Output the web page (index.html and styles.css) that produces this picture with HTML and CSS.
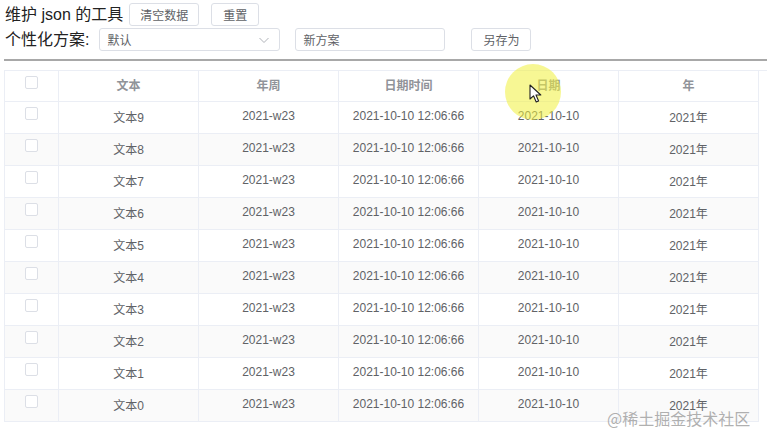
FILE: index.html
```html
<!DOCTYPE html>
<html lang="zh">
<head>
    <meta charset="UTF-8">
    <meta name="viewport" content="width=device-width, initial-scale=1.0">
    <title>维护 json 的工具</title>
    <link rel="stylesheet" href="styles.css">
</head>
<body>
    <div class="cabecera">
        <div class="fila">
            <span class="titulo">维护 json 的工具</span>
            <button class="boton ancho">清空数据</button>
            <button class="boton corto">重置</button>
        </div>
        <div class="fila">
            <span class="titulo etiqueta">个性化方案:</span>
            <div class="selector">
                <span>默认</span>
                <svg width="12" height="12" viewBox="0 0 12 12"><path d="M1.5 4 L6 8.5 L10.5 4" fill="none" stroke="#b0b3b9" stroke-width="1"/></svg>
            </div>
            <input class="entrada" value="新方案">
            <button class="boton guardar">另存为</button>
        </div>
    </div>
    <div class="linea"></div>

    <div class="tabla-caja">
        <table class="tabla">
            <colgroup>
                <col style="width:54px">
                <col style="width:140px">
                <col style="width:140px">
                <col style="width:140px">
                <col style="width:140px">
                <col style="width:140px">
            </colgroup>
            <thead>
                <tr>
                    <th><span class="casilla"></span></th>
                    <th>文本</th>
                    <th>年周</th>
                    <th>日期时间</th>
                    <th>日期</th>
                    <th>年</th>
                </tr>
            </thead>
            <tbody id="cuerpo"></tbody>
        </table>
    </div>

    <div class="cursor-luz"></div>
    <svg class="cursor" width="14" height="20" viewBox="0 0 14 20">
        <path d="M1 1 L1 15 L4.5 11.8 L7.2 18 L9.6 17 L7 11 L11.8 11 Z" fill="#fff" stroke="#222" stroke-width="1.1" stroke-linejoin="round"/>
    </svg>
    <div class="marca">@稀土掘金技术社区</div>

    <script>
        document.addEventListener('DOMContentLoaded', function() {
            const cuerpo = document.getElementById('cuerpo');
            for (let i = 9; i >= 0; i--) {
                const fila = document.createElement('tr');
                fila.innerHTML = `
                    <td><span class="casilla"></span></td>
                    <td>文本${i}</td>
                    <td>2021-w23</td>
                    <td>2021-10-10 12:06:66</td>
                    <td>2021-10-10</td>
                    <td>2021年</td>`;
                cuerpo.appendChild(fila);
            }
        });
    </script>
</body>
</html>
```

FILE: styles.css
```css
body {
    margin: 0;
    background-color: #fff;
    font-family: "Liberation Sans", "Noto Sans CJK SC", sans-serif;
    color: #222;
    position: relative;
    width: 767px;
    height: 442px;
    overflow: hidden;
}
.cabecera {
    padding: 3px 0 0 5px;
    display: flex;
    flex-direction: column;
    gap: 2px;
}
.fila {
    display: flex;
    align-items: center;
    height: 23px;
}
.titulo {
    font-size: 16px;
    line-height: 23px;
    margin-right: 6px;
}
.etiqueta {
    margin-right: 10px;
}
.boton {
    height: 23px;
    box-sizing: border-box;
    border: 1px solid #dcdfe6;
    border-radius: 3px;
    background-color: #fff;
    color: #606266;
    font-family: inherit;
    font-size: 12px;
    padding: 0;
    margin-right: 12px;
}
.ancho {
    width: 70px;
}
.corto {
    width: 48px;
}
.guardar {
    width: 60px;
    margin-left: 26px;
}
.selector {
    width: 181px;
    height: 23px;
    box-sizing: border-box;
    border: 1px solid #dcdfe6;
    border-radius: 3px;
    display: flex;
    align-items: center;
    justify-content: space-between;
    padding: 0 9px 0 7px;
    font-size: 12px;
    color: #606266;
    margin-right: 15px;
}
.selector svg {
    display: block;
}
.entrada {
    width: 150px;
    height: 23px;
    box-sizing: border-box;
    border: 1px solid #dcdfe6;
    border-radius: 3px;
    padding: 0 7px;
    font-family: inherit;
    font-size: 12px;
    color: #606266;
    outline: none;
}
.linea {
    margin: 8px 0 0 4px;
    height: 2px;
    background-color: #a8a8a8;
}
.tabla-caja {
    margin: 9px 0 0 4px;
    border-top: 1px solid #ebeef5;
}
.tabla {
    border-collapse: collapse;
    table-layout: fixed;
    width: 754px;
    font-size: 12px;
}
.tabla th,
.tabla td {
    border: 1px solid #ebeef5;
    border-top: none;
    text-align: center;
    padding: 0 0 2px 0;
    color: #606266;
    box-sizing: border-box;
}
.tabla th {
    height: 30px;
    font-weight: bold;
    color: #909399;
}
.tabla td {
    height: 32px;
}
.tabla tbody tr:nth-child(even) td {
    background-color: #fafafa;
}
.casilla {
    display: inline-block;
    width: 11px;
    height: 11px;
    border: 1px solid #dcdfe6;
    border-radius: 2px;
    background-color: #fff;
    vertical-align: middle;
    margin-top: -7px;
}
.cursor-luz {
    position: absolute;
    left: 505px;
    top: 64px;
    width: 56px;
    height: 56px;
    border-radius: 50%;
    background-color: rgba(240, 240, 60, 0.55);
}
.cursor {
    position: absolute;
    left: 529px;
    top: 84px;
}
.marca {
    position: absolute;
    left: 607px;
    top: 406px;
    font-size: 16px;
    color: rgba(150, 150, 150, 0.75);
    font-family: "Noto Sans CJK SC", sans-serif;
}
```
